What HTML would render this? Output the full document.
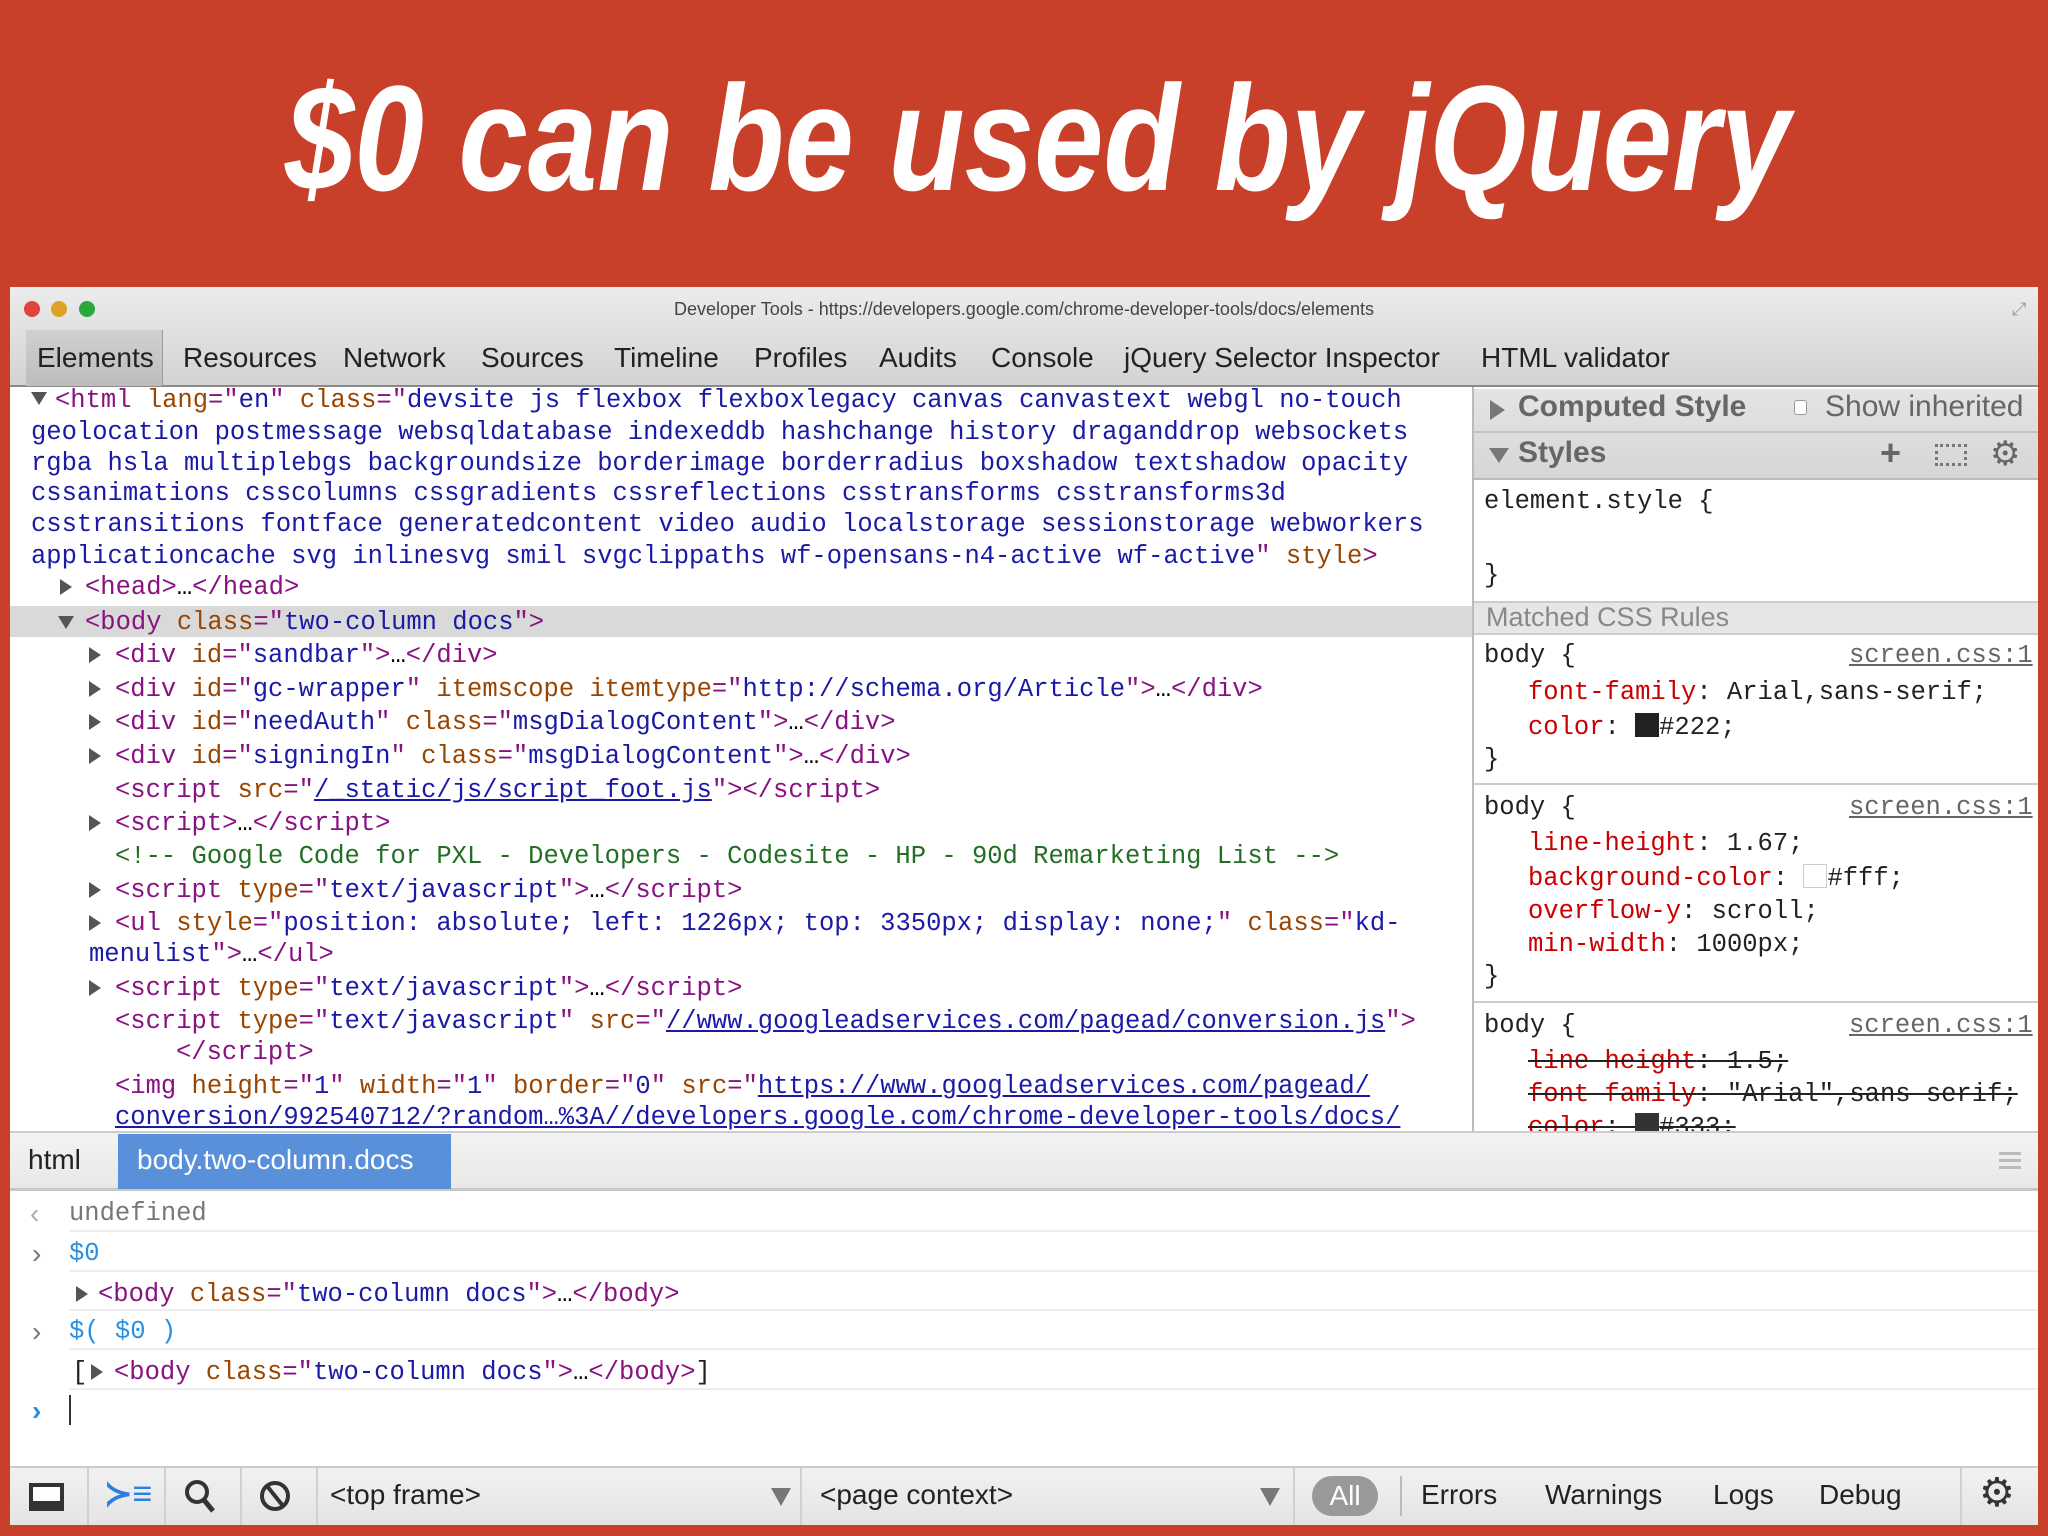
<!DOCTYPE html>
<html><head><meta charset="utf-8"><style>
*{margin:0;padding:0;box-sizing:border-box}
body{width:2048px;height:1536px;background:#c9402a;position:relative;overflow:hidden;font-family:"Liberation Sans",sans-serif}
.abs{position:absolute}
.win{position:absolute;left:10px;top:287px;width:2028px;height:1238px;background:#fff}
.m{position:absolute;font-family:"Liberation Mono",monospace;font-size:25.5px;white-space:pre;line-height:30px;margin-top:3px}
.t{color:#881280}.a{color:#994500}.v{color:#1a1aa6}.c{color:#236e25}.u{color:#1a1aa6;text-decoration:underline}
.k{color:#c80000}.tri{position:absolute;width:0;height:0;border-top:8px solid transparent;border-bottom:8px solid transparent;border-left:12px solid #555}
.trd{position:absolute;width:0;height:0;border-left:8px solid transparent;border-right:8px solid transparent;border-top:13px solid #555}
.tab{position:absolute;top:340px;font-size:28px;color:#222;line-height:36px;white-space:nowrap}
.sep{position:absolute;height:2px;background:#eee}
</style></head><body>
<svg class="abs" style="left:0;top:0" width="2048" height="287"><text x="285" y="190" textLength="1505" lengthAdjust="spacingAndGlyphs" font-family="Liberation Sans" font-weight="bold" font-style="italic" font-size="150" fill="#fff">$0 can be used by jQuery</text></svg>
<div class="win"></div>
<div class="abs" style="left:10px;top:287px;width:2028px;height:100px;background:linear-gradient(#ececec,#d3d3d3);border-bottom:2px solid #8a8a8a"></div>
<div class="abs" style="left:24px;top:301px;width:16px;height:16px;border-radius:50%;background:#e0443e"></div>
<div class="abs" style="left:51px;top:301px;width:16px;height:16px;border-radius:50%;background:#dea123"></div>
<div class="abs" style="left:79px;top:301px;width:16px;height:16px;border-radius:50%;background:#2aa83a"></div>
<div class="abs" style="left:0;width:2048px;top:297px;text-align:center;font-size:18px;color:#444;line-height:24px">Developer Tools - https://developers.google.com/chrome-developer-tools/docs/elements</div>
<div class="abs" style="left:2012px;top:299px;color:#999;font-size:18px">⤢</div>
<div class="abs" style="left:26px;top:330px;width:137px;height:56px;background:linear-gradient(#d0d0d0,#bdbdbd);border-right:1px solid #999"></div>
<div class="tab" style="left:37px">Elements</div>
<div class="tab" style="left:183px">Resources</div>
<div class="tab" style="left:343px">Network</div>
<div class="tab" style="left:481px">Sources</div>
<div class="tab" style="left:614px">Timeline</div>
<div class="tab" style="left:754px">Profiles</div>
<div class="tab" style="left:879px">Audits</div>
<div class="tab" style="left:991px">Console</div>
<div class="tab" style="left:1124px">jQuery Selector Inspector</div>
<div class="tab" style="left:1481px">HTML validator</div>
<div class="abs" style="left:10px;top:606px;width:1462px;height:31px;background:#d9d9d9"></div>
<div class="trd" style="left:31px;top:392px"></div>
<div class="m" style="left:55px;top:383px"><span class="t">&lt;html</span> <span class="a">lang</span><span class="t">="</span><span class="v">en</span><span class="t">"</span> <span class="a">class</span><span class="t">="</span><span class="v">devsite js flexbox flexboxlegacy canvas canvastext webgl no-touch</span></div>
<div class="m v" style="left:31px;top:415px">geolocation postmessage websqldatabase indexeddb hashchange history draganddrop websockets</div>
<div class="m v" style="left:31px;top:446px">rgba hsla multiplebgs backgroundsize borderimage borderradius boxshadow textshadow opacity</div>
<div class="m v" style="left:31px;top:476px">cssanimations csscolumns cssgradients cssreflections csstransforms csstransforms3d</div>
<div class="m v" style="left:31px;top:507px">csstransitions fontface generatedcontent video audio localstorage sessionstorage webworkers</div>
<div class="m" style="left:31px;top:539px"><span class="v">applicationcache svg inlinesvg smil svgclippaths wf-opensans-n4-active wf-active</span><span class="t">"</span> <span class="a">style</span><span class="t">&gt;</span></div>
<div class="tri" style="left:60px;top:579px"></div>
<div class="m" style="left:85px;top:570px"><span class="t">&lt;head&gt;</span>…<span class="t">&lt;/head&gt;</span></div>
<div class="trd" style="left:58px;top:616px"></div>
<div class="m" style="left:85px;top:605px"><span class="t">&lt;body</span> <span class="a">class</span><span class="t">="</span><span class="v">two-column docs</span><span class="t">"&gt;</span></div>
<div class="tri" style="left:89px;top:647px"></div>
<div class="m" style="left:115px;top:638px"><span class="t">&lt;div</span> <span class="a">id</span><span class="t">="</span><span class="v">sandbar</span><span class="t">"&gt;</span>…<span class="t">&lt;/div&gt;</span></div>
<div class="tri" style="left:89px;top:681px"></div>
<div class="m" style="left:115px;top:672px"><span class="t">&lt;div</span> <span class="a">id</span><span class="t">="</span><span class="v">gc-wrapper</span><span class="t">"</span> <span class="a">itemscope</span> <span class="a">itemtype</span><span class="t">="</span><span class="v">http://schema.org/Article</span><span class="t">"&gt;</span>…<span class="t">&lt;/div&gt;</span></div>
<div class="tri" style="left:89px;top:714px"></div>
<div class="m" style="left:115px;top:705px"><span class="t">&lt;div</span> <span class="a">id</span><span class="t">="</span><span class="v">needAuth</span><span class="t">"</span> <span class="a">class</span><span class="t">="</span><span class="v">msgDialogContent</span><span class="t">"&gt;</span>…<span class="t">&lt;/div&gt;</span></div>
<div class="tri" style="left:89px;top:748px"></div>
<div class="m" style="left:115px;top:739px"><span class="t">&lt;div</span> <span class="a">id</span><span class="t">="</span><span class="v">signingIn</span><span class="t">"</span> <span class="a">class</span><span class="t">="</span><span class="v">msgDialogContent</span><span class="t">"&gt;</span>…<span class="t">&lt;/div&gt;</span></div>
<div class="m" style="left:115px;top:773px"><span class="t">&lt;script</span> <span class="a">src</span><span class="t">="</span><span class="u">/_static/js/script_foot.js</span><span class="t">"&gt;&lt;/script&gt;</span></div>
<div class="tri" style="left:89px;top:815px"></div>
<div class="m" style="left:115px;top:806px"><span class="t">&lt;script&gt;</span>…<span class="t">&lt;/script&gt;</span></div>
<div class="m c" style="left:115px;top:839px">&lt;!-- Google Code for PXL - Developers - Codesite - HP - 90d Remarketing List --&gt;</div>
<div class="tri" style="left:89px;top:882px"></div>
<div class="m" style="left:115px;top:873px"><span class="t">&lt;script</span> <span class="a">type</span><span class="t">="</span><span class="v">text/javascript</span><span class="t">"&gt;</span>…<span class="t">&lt;/script&gt;</span></div>
<div class="tri" style="left:89px;top:915px"></div>
<div class="m" style="left:115px;top:906px"><span class="t">&lt;ul</span> <span class="a">style</span><span class="t">="</span><span class="v">position: absolute; left: 1226px; top: 3350px; display: none;</span><span class="t">"</span> <span class="a">class</span><span class="t">="</span><span class="v">kd-</span></div>
<div class="m" style="left:89px;top:937px"><span class="v">menulist</span><span class="t">"&gt;</span>…<span class="t">&lt;/ul&gt;</span></div>
<div class="tri" style="left:89px;top:980px"></div>
<div class="m" style="left:115px;top:971px"><span class="t">&lt;script</span> <span class="a">type</span><span class="t">="</span><span class="v">text/javascript</span><span class="t">"&gt;</span>…<span class="t">&lt;/script&gt;</span></div>
<div class="m" style="left:115px;top:1004px"><span class="t">&lt;script</span> <span class="a">type</span><span class="t">="</span><span class="v">text/javascript</span><span class="t">"</span> <span class="a">src</span><span class="t">="</span><span class="u">//www.googleadservices.com/pagead/conversion.js</span><span class="t">"&gt;</span></div>
<div class="m t" style="left:176px;top:1035px">&lt;/script&gt;</div>
<div class="m" style="left:115px;top:1069px"><span class="t">&lt;img</span> <span class="a">height</span><span class="t">="</span><span class="v">1</span><span class="t">"</span> <span class="a">width</span><span class="t">="</span><span class="v">1</span><span class="t">"</span> <span class="a">border</span><span class="t">="</span><span class="v">0</span><span class="t">"</span> <span class="a">src</span><span class="t">="</span><span class="u">https://www.googleadservices.com/pagead/</span></div>
<div class="m u" style="left:115px;top:1100px">conversion/992540712/?random…%3A//developers.google.com/chrome-developer-tools/docs/</div>
<div class="abs" style="left:1472px;top:387px;width:2px;height:744px;background:#bbb"></div>
<div class="abs" style="left:1474px;top:389px;width:564px;height:90px;background:linear-gradient(#e4e4e4,#d6d6d6)"></div>
<div class="abs" style="left:1474px;top:431px;width:564px;height:2px;background:#c4c4c4"></div>
<div class="abs" style="left:1474px;top:478px;width:564px;height:2px;background:#bbb"></div>
<div class="tri" style="left:1490px;top:400px;border-left-color:#777;border-top-width:10px;border-bottom-width:10px;border-left-width:15px"></div>
<div class="abs" style="left:1518px;top:390px;font-size:30px;font-weight:bold;color:#666">Computed Style</div>
<div class="abs" style="left:1794px;top:400px;width:13px;height:15px;border:1px solid #999;border-radius:3px;background:#fff"></div>
<div class="abs" style="left:1825px;top:390px;font-size:30px;color:#666">Show inherited</div>
<div class="trd" style="left:1489px;top:448px;border-top-color:#777;border-left-width:10px;border-right-width:10px;border-top-width:15px"></div>
<div class="abs" style="left:1518px;top:436px;font-size:30px;font-weight:bold;color:#666">Styles</div>
<div class="abs" style="left:1880px;top:432px;font-size:36px;font-weight:bold;color:#666">+</div>
<div class="abs" style="left:1935px;top:444px;width:32px;height:22px;border:3px dotted #777"></div>
<div class="abs" style="left:1990px;top:434px;font-size:34px;color:#666">⚙</div>
<div class="m" style="left:1484px;top:484px;color:#222">element.style {</div>
<div class="m" style="left:1484px;top:558px;color:#222">}</div>
<div class="abs" style="left:1474px;top:601px;width:564px;height:34px;background:#e6e6e6;border-top:2px solid #ccc;border-bottom:2px solid #ccc"></div>
<div class="abs" style="left:1486px;top:601px;font-size:27px;color:#888;line-height:32px">Matched CSS Rules</div>
<div class="m" style="left:1484px;top:638px;color:#222">body {</div>
<div class="m" style="left:1849px;top:638px;color:#666;text-decoration:underline">screen.css:1</div>
<div class="m" style="left:1528px;top:675px;color:#222"><span class="k">font-family</span>: Arial,sans-serif;</div>
<div class="m" style="left:1528px;top:710px;color:#222"><span class="k">color</span>: <span style="display:inline-block;width:24px;height:24px;background:#222;vertical-align:-3px"></span>#222;</div>
<div class="m" style="left:1484px;top:742px;color:#222">}</div>
<div class="sep" style="left:1474px;top:783px;width:564px;background:#ccc"></div>
<div class="m" style="left:1484px;top:790px;color:#222">body {</div>
<div class="m" style="left:1849px;top:790px;color:#666;text-decoration:underline">screen.css:1</div>
<div class="m" style="left:1528px;top:826px;color:#222"><span class="k">line-height</span>: 1.67;</div>
<div class="m" style="left:1528px;top:861px;color:#222"><span class="k">background-color</span>: <span style="display:inline-block;width:24px;height:24px;background:#fff;border:1px solid #ccc;vertical-align:-3px"></span>#fff;</div>
<div class="m" style="left:1528px;top:894px;color:#222"><span class="k">overflow-y</span>: scroll;</div>
<div class="m" style="left:1528px;top:927px;color:#222"><span class="k">min-width</span>: 1000px;</div>
<div class="m" style="left:1484px;top:959px;color:#222">}</div>
<div class="sep" style="left:1474px;top:1001px;width:564px;background:#ccc"></div>
<div class="m" style="left:1484px;top:1008px;color:#222">body {</div>
<div class="m" style="left:1849px;top:1008px;color:#666;text-decoration:underline">screen.css:1</div>
<div class="m" style="left:1528px;top:1044px;color:#222;text-decoration:line-through"><span class="k">line-height</span>: 1.5;</div>
<div class="m" style="left:1528px;top:1077px;color:#222;text-decoration:line-through"><span class="k">font-family</span>: "Arial",sans-serif;</div>
<div class="abs" style="left:1474px;top:1112px;width:564px;height:19px;overflow:hidden"><div class="m" style="left:54px;top:-2px;color:#222;text-decoration:line-through"><span class="k">color</span>: <span style="display:inline-block;width:24px;height:24px;background:#333;vertical-align:-3px"></span>#333;</div></div>
<div class="abs" style="left:10px;top:1131px;width:2028px;height:60px;background:linear-gradient(#f3f3f3,#e8e8e8);border-top:2px solid #ccc;border-bottom:3px solid #c8c8c8"></div>
<div class="abs" style="left:28px;top:1144px;font-size:28px;color:#222">html</div>
<div class="abs" style="left:118px;top:1134px;width:333px;height:55px;background:#5a8fd9"></div>
<div class="abs" style="left:137px;top:1144px;font-size:28px;color:#fff">body.two-column.docs</div>
<div class="abs" style="left:1999px;top:1152px;width:22px;height:3px;background:#bbb;box-shadow:0 7px 0 #bbb,0 14px 0 #bbb"></div>
<div class="sep" style="left:69px;top:1230px;width:1969px"></div>
<div class="sep" style="left:69px;top:1270px;width:1969px"></div>
<div class="sep" style="left:69px;top:1309px;width:1969px"></div>
<div class="sep" style="left:69px;top:1348px;width:1969px"></div>
<div class="sep" style="left:69px;top:1388px;width:1969px"></div>
<div class="abs" style="left:30px;top:1198px;font-size:28px;color:#aaa">‹</div>
<div class="m" style="left:69px;top:1196px;color:#777">undefined</div>
<div class="abs" style="left:32px;top:1238px;font-size:28px;color:#777">›</div>
<div class="m" style="left:69px;top:1236px;color:#2a8fe0">$0</div>
<div class="tri" style="left:76px;top:1286px"></div>
<div class="m" style="left:98px;top:1277px"><span class="t">&lt;body</span> <span class="a">class</span><span class="t">="</span><span class="v">two-column docs</span><span class="t">"&gt;</span>…<span class="t">&lt;/body&gt;</span></div>
<div class="abs" style="left:32px;top:1316px;font-size:28px;color:#777">›</div>
<div class="m" style="left:69px;top:1314px;color:#2a8fe0">$( $0 )</div>
<div class="m" style="left:72px;top:1355px;color:#222">[</div>
<div class="tri" style="left:91px;top:1364px"></div>
<div class="m" style="left:114px;top:1355px"><span class="t">&lt;body</span> <span class="a">class</span><span class="t">="</span><span class="v">two-column docs</span><span class="t">"&gt;</span>…<span class="t">&lt;/body&gt;</span><span style="color:#222">]</span></div>
<div class="abs" style="left:32px;top:1395px;font-size:28px;color:#2a8fe0;font-weight:bold">›</div>
<div class="abs" style="left:69px;top:1395px;width:2px;height:30px;background:#333"></div>
<div class="abs" style="left:10px;top:1466px;width:2028px;height:59px;background:linear-gradient(#f1f1f1,#e4e4e4);border-top:2px solid #ccc"></div>
<div class="abs" style="left:29px;top:1483px;width:35px;height:28px;border:4px solid #333;border-bottom-width:10px;background:#fff"></div>
<div class="abs" style="left:87px;top:1468px;width:2px;height:57px;background:#d0d0d0"></div>
<div class="abs" style="left:104px;top:1474px;font-size:34px;font-weight:bold;color:#2a7fe0">≻≡</div>
<div class="abs" style="left:164px;top:1468px;width:2px;height:57px;background:#d0d0d0"></div>
<svg class="abs" style="left:183px;top:1478px" width="34" height="36"><circle cx="14" cy="14" r="10" fill="none" stroke="#333" stroke-width="4"/><line x1="21" y1="22" x2="30" y2="33" stroke="#333" stroke-width="5"/></svg>
<div class="abs" style="left:240px;top:1468px;width:2px;height:57px;background:#d0d0d0"></div>
<svg class="abs" style="left:258px;top:1478px" width="34" height="36"><circle cx="17" cy="18" r="13" fill="none" stroke="#333" stroke-width="4"/><line x1="9" y1="8" x2="25" y2="28" stroke="#333" stroke-width="4"/></svg>
<div class="abs" style="left:316px;top:1468px;width:2px;height:57px;background:#d0d0d0"></div>
<div class="abs" style="left:330px;top:1479px;font-size:28px;color:#222">&lt;top frame&gt;</div>
<div class="trd" style="left:771px;top:1488px;border-top-color:#777;border-top-width:18px;border-left-width:10px;border-right-width:10px"></div>
<div class="abs" style="left:800px;top:1468px;width:2px;height:57px;background:#d0d0d0"></div>
<div class="abs" style="left:820px;top:1479px;font-size:28px;color:#222">&lt;page context&gt;</div>
<div class="trd" style="left:1260px;top:1488px;border-top-color:#777;border-top-width:18px;border-left-width:10px;border-right-width:10px"></div>
<div class="abs" style="left:1293px;top:1468px;width:2px;height:57px;background:#d0d0d0"></div>
<div class="abs" style="left:1312px;top:1476px;width:66px;height:40px;border-radius:20px;background:#999;color:#fff;font-size:28px;text-align:center;line-height:40px">All</div>
<div class="abs" style="left:1400px;top:1476px;width:2px;height:40px;background:#bbb"></div>
<div class="abs" style="left:1421px;top:1479px;font-size:28px;color:#222">Errors</div>
<div class="abs" style="left:1545px;top:1479px;font-size:28px;color:#222">Warnings</div>
<div class="abs" style="left:1713px;top:1479px;font-size:28px;color:#222">Logs</div>
<div class="abs" style="left:1819px;top:1479px;font-size:28px;color:#222">Debug</div>
<div class="abs" style="left:1960px;top:1468px;width:2px;height:57px;background:#d0d0d0"></div>
<div class="abs" style="left:1979px;top:1470px;font-size:40px;color:#333">⚙</div>
</body></html>
